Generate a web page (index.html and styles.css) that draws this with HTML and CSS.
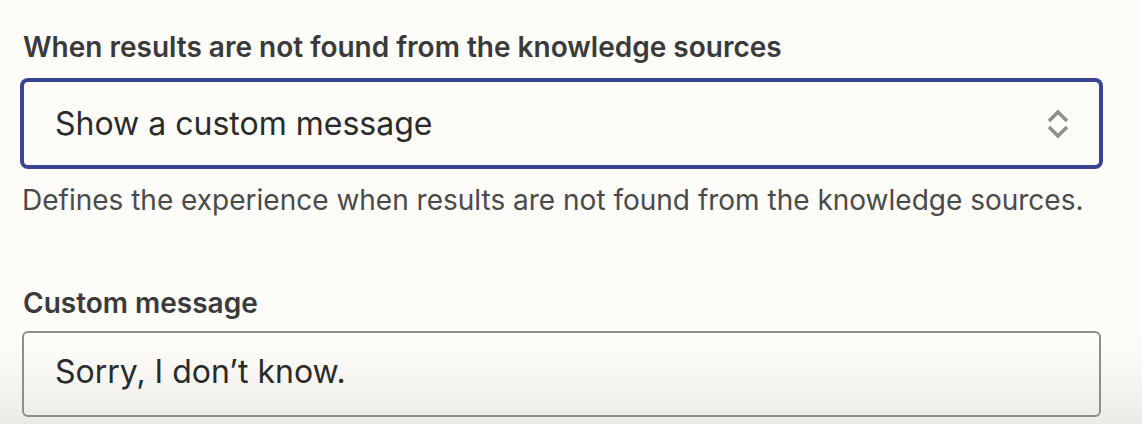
FILE: index.html
```html
<!DOCTYPE html>
<html lang="en">
<head>
<meta charset="utf-8">
<title>Knowledge settings</title>
<link rel="stylesheet" href="styles.css">
</head>
<body>
<main class="form">
  <section class="field">
    <label class="field-label" for="fallback">When results are not found from the knowledge sources</label>
    <div class="select" id="fallback">
      <span class="select-value">Show a custom message</span>
      <svg class="select-icon" width="22" height="36" viewBox="0 0 22 36" aria-hidden="true">
        <polyline points="2,15 11,6 20,15" fill="none" stroke="#8e8e8c" stroke-width="3.5"/>
        <polyline points="2,21 11,30 20,21" fill="none" stroke="#8e8e8c" stroke-width="3.5"/>
      </svg>
    </div>
    <p class="field-help">Defines the experience when results are not found from the knowledge sources.</p>
  </section>
  <section class="field field-second">
    <label class="field-label" for="custom">Custom message</label>
    <div class="textbox" id="custom">Sorry, I don’t know.</div>
  </section>
</main>
</body>
</html>
```
FILE: styles.css
```css
html, body {
  margin: 0;
  height: 100%;
}
body {
  background: linear-gradient(to bottom, #fdfcf9 0%, #fdfcf9 80%, #f6f5f1 90%, #ebeae6 100%);
  font-family: "Inter", "Liberation Sans", sans-serif;
  overflow: hidden;
}
.form {
  display: flex;
  flex-direction: column;
  padding: 27px 41px 0 22px;
}
.field {
  display: flex;
  flex-direction: column;
}
.field-label {
  font-size: 28px;
  font-weight: 600;
  line-height: 40px;
  color: #3a3a3a;
  padding-left: 1px;
}
.select {
  margin-top: 13px;
  height: 83px;
  border: 2px solid #3b4492;
  box-shadow: 0 0 0 2px #3b4492;
  border-radius: 6px;
  display: flex;
  align-items: center;
  justify-content: space-between;
  padding: 0 30px 0 31px;
  background: #fdfcf9;
}
.select-value {
  font-size: 32px;
  line-height: 44px;
  color: #2b2b2b;
}
.select-icon {
  display: block;
  margin-top: 1px;
}
.field-help {
  margin: 13px 0 0 0;
  font-size: 28px;
  line-height: 40px;
  color: #4a4a4a;
}
.field-second {
  margin-top: 63px;
}
.textbox {
  margin-top: 8px;
  border: 2px solid #8e8e8b;
  border-radius: 6px;
  padding: 15px 31px 0 31px;
  box-sizing: content-box;
  height: 67px;
  font-size: 32px;
  line-height: 48px;
  color: #2b2b2b;
}
```
